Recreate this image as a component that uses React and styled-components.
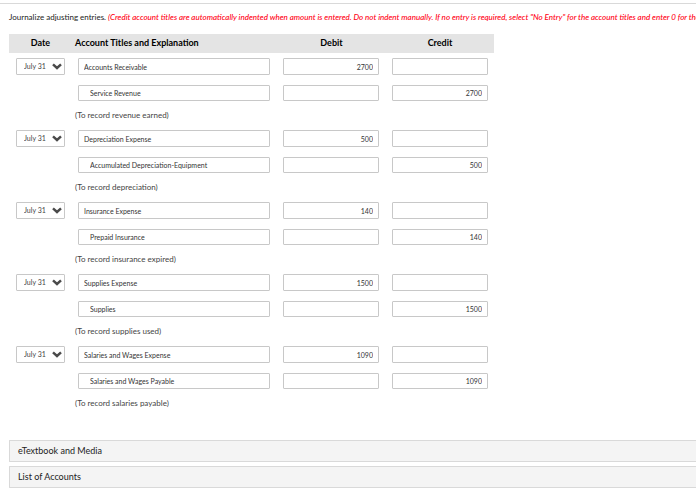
import React from 'react'
import styled, { createGlobalStyle } from 'styled-components'

const GlobalStyle = createGlobalStyle`
  * {
    box-sizing: border-box;
  }

  body {
    margin: 0;
    background: #fff;
    font-family: Lato, sans-serif;
    overflow-x: hidden;
  }
`

const Page = styled.main`
  margin-top: 3px;
  padding: 6px 0 2px 9px;
  border-top: 1px solid #d9d9d9;
  overflow: hidden;
`

const Instructions = styled.p`
  margin: 0 0 9px;
  font-size: 8px;
  line-height: 15px;
  white-space: nowrap;
  color: #222;
`

const Hint = styled.em`
  font-weight: 500;
  color: #ff0014;
`

const Journal = styled.table`
  width: 485px;
  table-layout: fixed;
  border-collapse: collapse;
`

const HeadCell = styled.th`
  width: ${p => p.$width};
  height: 19px;
  padding: 0 3px 1px;
  background: #e4e4e4;
  color: #000;
  font-size: 9px;
  line-height: 18px;
  text-align: ${p => p.$align || 'center'};
`

const Cell = styled.td`
  padding: 5px 6px;
  vertical-align: top;
`

const DateCell = styled(Cell)`
  padding-left: 7px;
`

const NoteCell = styled.td`
  height: 19px;
  padding: 0 3px;
  color: #444;
  font-size: 8px;
  line-height: 19px;
`

const DateBox = styled.div`
  position: relative;
  width: 49px;

  svg {
    position: absolute;
    top: 5px;
    right: 3px;
    pointer-events: none;
  }
`

const DateSelect = styled.select`
  display: block;
  width: 100%;
  height: 17px;
  padding: 0 0 0 7px;
  border: 1px solid #c8c8c8;
  border-radius: 1px;
  background: #fff;
  color: #444;
  font: 7px/15px Lato, sans-serif;
  appearance: none;
`

const Field = styled.input`
  display: block;
  width: ${p => (p.$amount ? '96px' : '192px')};
  height: ${p => (p.$second ? '16px' : '17px')};
  padding: 0 5px 0 ${p => (p.$second ? '11px' : '5px')};
  border: 1px solid #c8c8c8;
  border-radius: 1px;
  background: #fff;
  color: #333;
  font: 7px Lato, sans-serif;
  text-align: ${p => (p.$amount ? 'right' : 'left')};
`

const Panels = styled.div`
  display: grid;
  gap: 4px;
  margin-top: 27px;
`

const Panel = styled.button`
  height: 22px;
  padding: 0 8px 1px;
  border: 1px solid #d9d9d9;
  border-right: 0;
  border-radius: 1px 0 0 1px;
  background: #f4f4f4;
  color: #222;
  font: 9px Lato, sans-serif;
  text-align: left;
`

const entries = [
  { debit: 'Accounts Receivable', credit: 'Service Revenue', amount: '2700', note: '(To record revenue earned)' },
  { debit: 'Depreciation Expense', credit: 'Accumulated Depreciation-Equipment', amount: '500', note: '(To record depreciation)' },
  { debit: 'Insurance Expense', credit: 'Prepaid Insurance', amount: '140', note: '(To record insurance expired)' },
  { debit: 'Supplies Expense', credit: 'Supplies', amount: '1500', note: '(To record supplies used)' },
  { debit: 'Salaries and Wages Expense', credit: 'Salaries and Wages Payable', amount: '1090', note: '(To record salaries payable)' },
]

const Chevron = () => (
  <svg width="10" height="7" viewBox="0 0 10 7" aria-hidden="true">
    <path d="M1 1.3 L5 5 L9 1.3" fill="none" stroke="#4a4a4a" strokeWidth="2.4" />
  </svg>
)

const Entry = ({ debit, credit, amount, note }) => (
  <tbody>
    <tr>
      <DateCell>
        <DateBox>
          <DateSelect aria-label={`Date for ${debit}`}>
            <option>July 31</option>
          </DateSelect>
          <Chevron />
        </DateBox>
      </DateCell>
      <Cell>
        <Field aria-label="Account debited" defaultValue={debit} />
      </Cell>
      <Cell>
        <Field $amount aria-label={`${debit} debit`} defaultValue={amount} />
      </Cell>
      <Cell>
        <Field $amount aria-label={`${debit} credit`} />
      </Cell>
    </tr>
    <tr>
      <DateCell />
      <Cell>
        <Field $second aria-label="Account credited" defaultValue={credit} />
      </Cell>
      <Cell>
        <Field $amount $second aria-label={`${credit} debit`} />
      </Cell>
      <Cell>
        <Field $amount $second aria-label={`${credit} credit`} defaultValue={amount} />
      </Cell>
    </tr>
    <tr>
      <NoteCell />
      <NoteCell colSpan={3}>{note}</NoteCell>
    </tr>
  </tbody>
)

const App = () => {
  return (
    <>
      <GlobalStyle />
      <Page>
        <Instructions>
          Journalize adjusting entries.{' '}
          <Hint>
            (Credit account titles are automatically indented when amount is entered. Do not indent manually. If no
            entry is required, select "No Entry" for the account titles and enter 0 for the amounts.)
          </Hint>
        </Instructions>
        <Journal>
          <thead>
            <tr>
              <HeadCell $width="63px">Date</HeadCell>
              <HeadCell $width="205px" $align="left">Account Titles and Explanation</HeadCell>
              <HeadCell $width="109px">Debit</HeadCell>
              <HeadCell $width="108px">Credit</HeadCell>
            </tr>
          </thead>
          {entries.map(entry => (
            <Entry key={entry.debit} {...entry} />
          ))}
        </Journal>
        <Panels>
          <Panel type="button">eTextbook and Media</Panel>
          <Panel type="button">List of Accounts</Panel>
        </Panels>
      </Page>
    </>
  )
}

export default App
